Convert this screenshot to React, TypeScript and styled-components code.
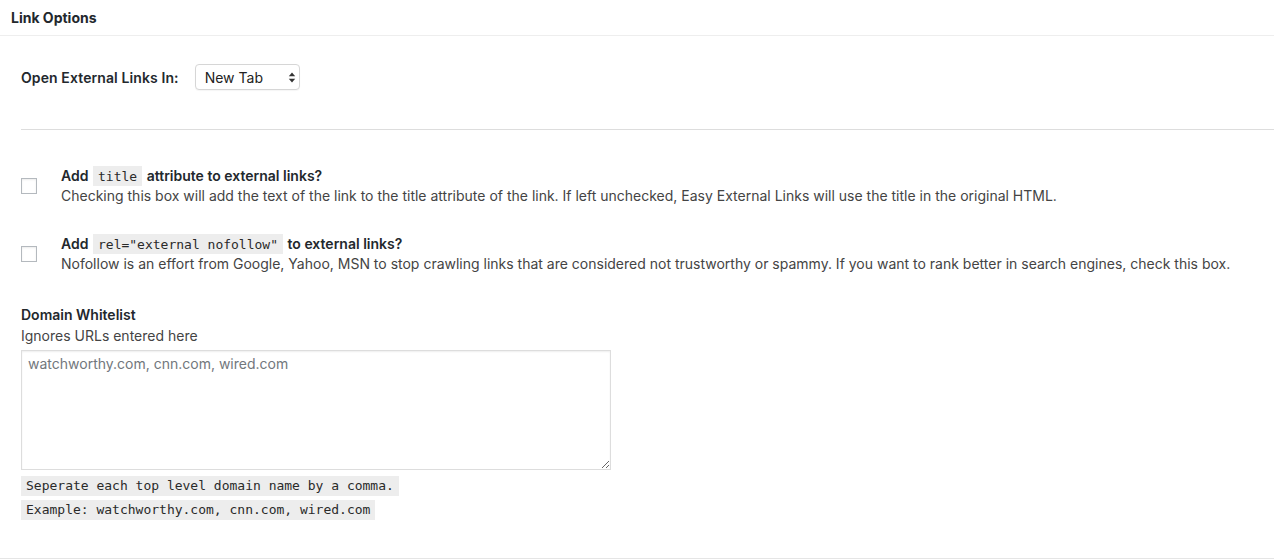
import React from "react";
import styled, { createGlobalStyle } from "styled-components";

const Global = createGlobalStyle`
  html, body { margin: 0; padding: 0; background: #fff; }
  body { font-family: Inter, "Noto Sans", "Liberation Sans", sans-serif; color: #444; }
  * { box-sizing: border-box; }
`;

const Postbox = styled.div`
  width: 1274px;
  min-height: 559px;
  border-bottom: 1px solid #e5e5e5;
  background: #fff;
`;

const Header = styled.h2`
  margin: 0;
  height: 36px;
  padding: 9px 11px 0;
  font-size: 14px;
  line-height: 18px;
  font-weight: 700;
  color: #23282d;
  border-bottom: 1px solid #eee;
`;

const Inside = styled.div`
  padding: 28px 0 0 21px;
`;

const FieldRow = styled.div`
  display: flex;
  align-items: center;
  gap: 16px;
  height: 26px;
`;

const Label = styled.label`
  font-size: 14px;
  font-weight: 600;
  letter-spacing: 0.1px;
  color: #23282d;
`;

const SelectWrap = styled.div`
  position: relative;
  width: 105px;
  height: 26px;
`;

const Select = styled.select`
  appearance: none;
  -webkit-appearance: none;
  width: 100%;
  height: 100%;
  border: 1px solid #d6d6d6;
  border-radius: 4px;
  background: #fff;
  padding: 0 0 0 9px;
  font-family: inherit;
  font-size: 14px;
  color: #222;
  box-shadow: 0 1px 1px rgba(0, 0, 0, 0.04);
`;

const Arrows = styled.svg`
  position: absolute;
  right: 4px;
  top: 8px;
  pointer-events: none;
`;

const Rule = styled.hr`
  margin: 39px 0 0;
  border: 0;
  border-top: 1px solid #ddd;
`;

const Options = styled.div`
  display: flex;
  flex-direction: column;
  gap: 29px;
  margin-top: 36px;
`;

const CheckRow = styled.div`
  display: flex;
  align-items: center;
  gap: 24px;
`;

const Check = styled.input`
  appearance: none;
  -webkit-appearance: none;
  margin: 0;
  width: 16px;
  height: 16px;
  flex: none;
  border: 1px solid #b4b9be;
  background: #fff;
  box-shadow: inset 0 1px 2px rgba(0, 0, 0, 0.08);
`;

const CheckText = styled.div`
  font-size: 14px;
  line-height: 19px;
`;

const CheckTitle = styled.div`
  font-weight: 600;
  color: #23282d;
`;

const Code = styled.code`
  font-family: "DejaVu Sans Mono", "Liberation Mono", monospace;
  font-size: 13px;
  font-weight: 400;
  padding: 3px 5px 2px;
  margin: 0 1px;
  background: rgba(0, 0, 0, 0.07);
  color: #2a2a2a;
`;

const Desc = styled.div`
  color: #444;
`;

const Whitelist = styled.div`
  margin-top: 31px;
  display: flex;
  flex-direction: column;
`;

const SubLabel = styled.div`
  font-size: 14px;
  line-height: 21px;
  font-weight: 600;
  color: #23282d;
`;

const Hint = styled.div`
  font-size: 14px;
  line-height: 21px;
  color: #444;
`;

const Area = styled.textarea`
  margin-top: 4px;
  width: 590px;
  height: 120px;
  border: 1px solid #ddd;
  padding: 4px 6px;
  font-family: inherit;
  font-size: 14px;
  line-height: 18px;
  color: #32373c;
  resize: both;
  box-shadow: inset 0 1px 2px rgba(0, 0, 0, 0.07);
  &::placeholder { color: #72777c; }
`;

const Notes = styled.div`
  display: flex;
  flex-direction: column;
  align-items: flex-start;
  gap: 4px;
  margin-top: 6px;
`;

const Note = styled(Code)`
  display: inline-block;
  margin: 0;
  padding: 2px 5px;
  line-height: 16px;
`;

export default function App() {
  return (
    <>
      <Global />
      <Postbox>
        <Header>Link Options</Header>
        <Inside>
          <FieldRow>
            <Label>Open External Links In:</Label>
            <SelectWrap>
              <Select defaultValue="new">
                <option value="new">New Tab</option>
                <option value="same">Same Tab</option>
              </Select>
              <Arrows width="8" height="11" viewBox="0 0 8 11">
                <path d="M4 0.5 L7.2 4.3 H0.8 Z" fill="#333" />
                <path d="M4 10.5 L7.2 6.7 H0.8 Z" fill="#333" />
              </Arrows>
            </SelectWrap>
          </FieldRow>
          <Rule />
          <Options>
            <CheckRow>
              <Check type="checkbox" />
              <CheckText>
                <CheckTitle>
                  Add <Code>title</Code> attribute to external links?
                </CheckTitle>
                <Desc>
                  Checking this box will add the text of the link to the title attribute of the link. If left
                  unchecked, Easy External Links will use the title in the original HTML.
                </Desc>
              </CheckText>
            </CheckRow>
            <CheckRow>
              <Check type="checkbox" />
              <CheckText>
                <CheckTitle>
                  Add <Code>rel="external nofollow"</Code> to external links?
                </CheckTitle>
                <Desc>
                  Nofollow is an effort from Google, Yahoo, MSN to stop crawling links that are considered not
                  trustworthy or spammy. If you want to rank better in search engines, check this box.
                </Desc>
              </CheckText>
            </CheckRow>
          </Options>
          <Whitelist>
            <SubLabel>Domain Whitelist</SubLabel>
            <Hint>Ignores URLs entered here</Hint>
            <Area placeholder="watchworthy.com, cnn.com, wired.com" />
            <Notes>
              <Note>Seperate each top level domain name by a comma.</Note>
              <Note>Example: watchworthy.com, cnn.com, wired.com</Note>
            </Notes>
          </Whitelist>
        </Inside>
      </Postbox>
    </>
  );
}
